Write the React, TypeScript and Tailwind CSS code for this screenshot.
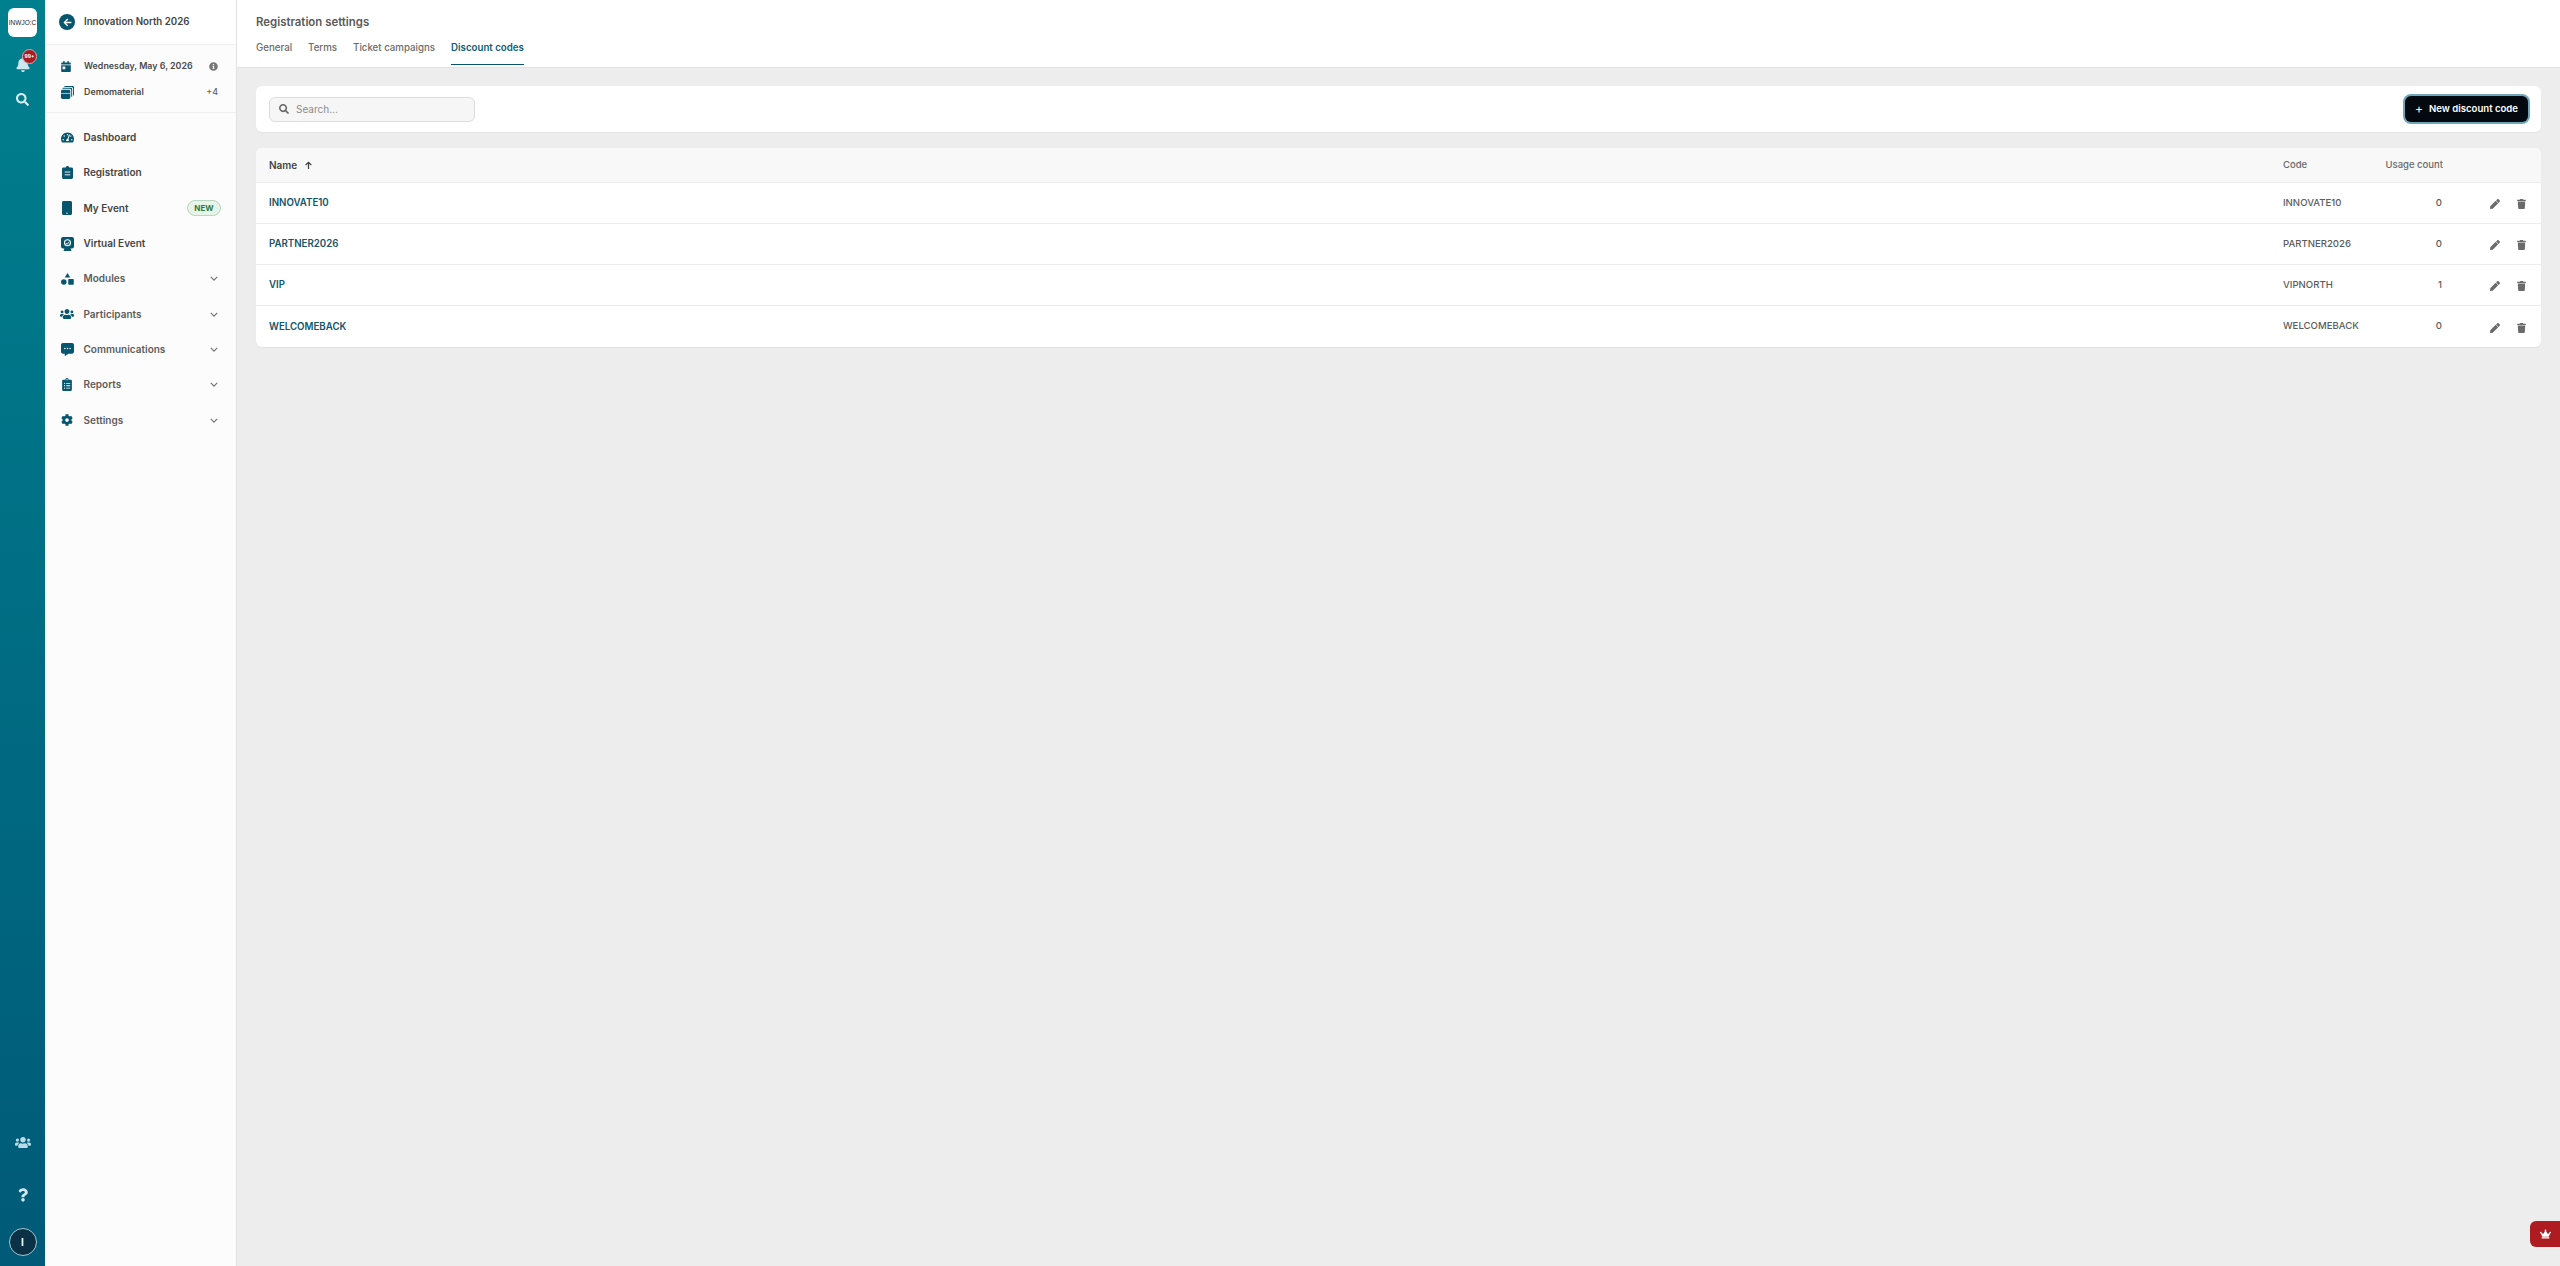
import type { ReactNode } from "react";
import {
  FaArrowLeft,
  FaBell,
  FaCalendarDay,
  FaClipboardList,
  FaCog,
  FaCrown,
  FaInfoCircle,
  FaPen,
  FaQuestion,
  FaSearch,
  FaTachometerAlt,
  FaTrash,
  FaUsers,
} from "react-icons/fa";

const RegistrationIcon = () => (
  <svg viewBox="0 0 12 14" className="h-[13px] w-[11px]" fill="currentColor">
    <path d="M4.2 1.6C4.3.7 5 0 6 0s1.7.7 1.8 1.6H10.5c.8 0 1.5.7 1.5 1.5v9.4c0 .8-.7 1.5-1.5 1.5h-9C.7 14 0 13.3 0 12.5V3.1c0-.8.7-1.5 1.5-1.5h2.7Z" />
    <path d="M3 6.5h6M3 9.5h6" stroke="#fff" strokeWidth="1" />
  </svg>
);

const PhoneIcon = () => (
  <svg viewBox="0 0 10 14" className="h-[14px] w-[10px]" fill="currentColor">
    <path d="M1.5 0h7C9.3 0 10 .7 10 1.5v11c0 .8-.7 1.5-1.5 1.5h-7C.7 14 0 13.3 0 12.5v-11C0 .7.7 0 1.5 0Z" />
    <circle cx="5" cy="12.2" r=".7" fill="#fff" />
  </svg>
);

const VirtualIcon = () => (
  <svg viewBox="0 0 13 14" className="h-[14px] w-[13px]" fill="currentColor">
    <path d="M2 0h9c1.1 0 2 .9 2 2v7.5c0 1.1-.9 2-2 2H9.5l.8 1.5c.2.4 0 1-.5 1H3.2c-.5 0-.7-.6-.5-1l.8-1.5H2c-1.1 0-2-.9-2-2V2C0 .9.9 0 2 0Z" />
    <circle cx="6.5" cy="5.8" r="3" fill="none" stroke="#fff" strokeWidth="1.1" />
    <path d="M5 6.2 6.2 7.2 8.1 4.9" fill="none" stroke="#fff" strokeWidth=".9" />
  </svg>
);

const ModulesIcon = () => (
  <svg viewBox="0 0 14 13" className="h-[12px] w-[13px]" fill="currentColor">
    <path d="M7 0 10 4.8H4Z" />
    <circle cx="3" cy="9.8" r="3" />
    <rect x="7.8" y="6.4" width="6" height="6.4" rx=".8" />
  </svg>
);

const MessageIcon = () => (
  <svg viewBox="0 0 14 14" className="h-[13px] w-[13px]" fill="currentColor">
    <path d="M2 0h10c1.1 0 2 .9 2 2v7.5c0 1.1-.9 2-2 2H8l-3.2 2.3c-.3.2-.8 0-.8-.4v-1.900H2c-1.1 0-2-.9-2-2V2C0 .9.9 0 2 0Z" />
    <circle cx="4.2" cy="5.8" r=".8" fill="#fff" />
    <circle cx="7" cy="5.8" r=".8" fill="#fff" />
    <circle cx="9.8" cy="5.8" r=".8" fill="#fff" />
  </svg>
);

const MaterialIcon = () => (
  <svg viewBox="0 0 14 14" className="h-[13px] w-[13px] text-[#07566f]" fill="currentColor">
    <path d="M4.5 0H12.5C13.3 0 14 .7 14 1.5V9.5C14 10.1 13.5 10.5 13 10.5V2.7C13 1.8 12.2 1 11.3 1H3.5C3.5.5 3.9 0 4.500 0Z" />
    <path d="M2.5 2H10.5C11.3 2 12 2.700 12 3.5V11.5H11V4.700C11 3.800 10.200 3 9.300 3H1.500C1.500 2.500 1.900 2 2.500 2Z" />
    <path d="M1.500 4H8.500C9.300 4 10 4.700 10 5.500V12.500C10 13.300 9.300 14 8.500 14H1.500C.7 14 0 13.300 0 12.500V5.500C0 4.700.7 4 1.500 4Z" />
    <path d="M0 8h10" stroke="#fff" strokeWidth=".7" />
  </svg>
);

const Chevron = () => (
  <svg viewBox="0 0 10 6" className="ml-auto h-[5px] w-[8px]" fill="none" stroke="#777" strokeWidth="1.6">
    <path d="M1 1l4 4 4-4" />
  </svg>
);

type NavItem = { label: string; icon: ReactNode; muted?: boolean; chevron?: boolean; badge?: string };

const navItems: NavItem[] = [
  { label: "Dashboard", icon: <FaTachometerAlt className="h-[13px] w-[13px]" /> },
  { label: "Registration", icon: <RegistrationIcon /> },
  { label: "My Event", icon: <PhoneIcon />, badge: "NEW" },
  { label: "Virtual Event", icon: <VirtualIcon /> },
  { label: "Modules", icon: <ModulesIcon />, muted: true, chevron: true },
  { label: "Participants", icon: <FaUsers className="h-[12px] w-[14px]" />, muted: true, chevron: true },
  { label: "Communications", icon: <MessageIcon />, muted: true, chevron: true },
  { label: "Reports", icon: <FaClipboardList className="h-[13px] w-[10px]" />, muted: true, chevron: true },
  { label: "Settings", icon: <FaCog className="h-[12px] w-[12px]" />, muted: true, chevron: true },
];

const codes = [
  { name: "INNOVATE10", code: "INNOVATE10", count: 0 },
  { name: "PARTNER2026", code: "PARTNER2026", count: 0 },
  { name: "VIP", code: "VIPNORTH", count: 1 },
  { name: "WELCOMEBACK", code: "WELCOMEBACK", count: 0 },
];

const tabs = ["General", "Terms", "Ticket campaigns", "Discount codes"];

export default function App() {
  return (
    <div className="flex h-[1266px] w-full overflow-hidden bg-[#ededed] font-['Inter',sans-serif]">
      {/* Icon rail */}
      <aside className="flex w-[45px] shrink-0 flex-col items-center bg-gradient-to-b from-[#00808f] to-[#005a78]">
        <div className="mt-2 flex h-[29px] w-[29px] items-center justify-center overflow-hidden whitespace-nowrap rounded-md bg-white font-['Liberation_Sans',sans-serif] text-[6.5px] text-[#222]">
          INWJO:C
        </div>
        <div className="relative mt-[17px] flex h-[20px] w-full items-center justify-center text-[#cfe7ee]">
          <FaBell className="h-[15px] w-[14px]" />
          <span className="absolute left-[22px] top-[-5px] flex h-[15px] w-[15px] items-center justify-center rounded-full border border-[#d9a3a3] bg-[#a81c22] text-[5px] font-bold text-white">
            99+
          </span>
        </div>
        <FaSearch className="mt-[19px] h-[13px] w-[13px] text-[#d5eef3]" />
        <div className="flex-1" />
        <FaUsers className="mb-[39px] h-[13px] w-[16px] text-[#b9dde6]" />
        <FaQuestion className="mb-[26px] h-[14px] w-[10px] text-[#cfe7ee]" />
        <div className="mb-[10px] flex h-[28px] w-[28px] items-center justify-center rounded-full border border-[#a6c9d1] bg-[#0b3146] text-[10px] font-bold text-white">
          I
        </div>
      </aside>

      {/* Event sidebar */}
      <nav className="flex w-[192px] shrink-0 flex-col border-r border-[#e2e2e2] bg-[#fcfcfc]">
        <div className="flex h-[45px] items-center gap-[9px] border-b border-[#f0f0f0] bg-white pl-[14px]">
          <span className="flex h-4 w-4 items-center justify-center rounded-full bg-[#07566f] text-white">
            <FaArrowLeft className="h-[9px] w-[9px]" />
          </span>
          <span className="text-[9.7px] font-semibold text-[#444]">Innovation North 2026</span>
        </div>
        <div className="flex h-[68px] flex-col gap-[14px] border-b border-[#f0f0f0] pl-[16px] pr-[18px] pt-[15px] text-[8.9px] font-semibold text-[#4a4a4a]">
          <div className="flex h-[12px] items-center">
            <FaCalendarDay className="h-[11px] w-[10px] text-[#07566f]" />
            <span className="ml-[13px]">Wednesday, May 6, 2026</span>
            <FaInfoCircle className="ml-auto h-[9px] w-[9px] text-[#777]" />
          </div>
          <div className="flex h-[12px] items-center">
            <MaterialIcon />
            <span className="ml-[10px]">Demomaterial</span>
            <span className="ml-auto font-medium text-[#666]">+4</span>
          </div>
        </div>
        <ul className="flex flex-col pt-[7px] text-[#07566f]">
          {navItems.map((item) => (
            <li key={item.label} className="flex h-[35.3px] items-center pl-[15px] pr-[18px]">
              <span className="flex w-[14px] justify-center">{item.icon}</span>
              <span className={`ml-[9.5px] text-[10px] font-semibold ${item.muted ? "text-[#5c5c5c]" : "text-[#444]"}`}>
                {item.label}
              </span>
              {item.chevron && <Chevron />}
              {item.badge && (
                <span className="-mr-[3px] ml-auto flex h-[16px] w-[34px] items-center justify-center rounded-full border border-[#b9d6bf] bg-[#e7f4e9] text-[8px] font-bold text-[#2c7a43]">
                  {item.badge}
                </span>
              )}
            </li>
          ))}
        </ul>
      </nav>

      {/* Main */}
      <main className="relative flex min-w-0 flex-1 flex-col">
        <header className="h-[68px] border-b border-[#e2e2e2] bg-white px-[19px]">
          <h1 className="pt-[15px] text-[11.4px] font-semibold leading-[15px] text-[#5a5a5a]">Registration settings</h1>
          <div className="mt-[10px] flex gap-4 text-[9.7px] font-medium text-[#6b6b6b]">
            {tabs.map((tab) =>
              tab === "Discount codes" ? (
                <span key={tab} className="h-[25px] border-b border-[#07566f] pt-[1px] leading-[14px] font-semibold text-[#0f5f73]">
                  {tab}
                </span>
              ) : (
                <span key={tab} className="h-[25px] pt-[1px] leading-[14px]">
                  {tab}
                </span>
              ),
            )}
          </div>
        </header>

        <div className="flex flex-col gap-4 py-[18px] pl-[19px] pr-[19px]">
          <section className="flex h-[46px] items-center justify-between rounded-md bg-white px-[13px] shadow-[0_1px_1px_rgba(0,0,0,0.04)]">
            <div className="flex h-[25px] w-[206px] items-center gap-[7px] rounded-md border border-[#dcdcdc] bg-[#f6f6f6] pl-[9px]">
              <FaSearch className="h-[10px] w-[10px] text-[#666]" />
              <span className="text-[10px] text-[#8c8c8c]">Search...</span>
            </div>
            <button className="flex h-[26px] w-[123px] items-center justify-center gap-[6px] rounded-md bg-[#03090f] text-[9.6px] font-semibold text-white ring-2 ring-[#6fa7b8]">
              <span className="text-[12px] font-normal leading-none">+</span>
              New discount code
            </button>
          </section>

          <section className="overflow-hidden rounded-md bg-white shadow-[0_1px_1px_rgba(0,0,0,0.05)]">
            <div className="flex h-[35px] items-center border-b border-[#ececec] bg-[#f8f8f8] pl-[13px] text-[9.5px] text-[#6a6a6a]">
              <div className="flex flex-1 items-center gap-[7px] text-[10px] font-semibold text-[#444]">
                Name
                <svg viewBox="0 0 10 10" className="h-[9px] w-[9px]" fill="none" stroke="#444" strokeWidth="1.4">
                  <path d="M5 9V1.5M1.8 4.5 5 1.5l3.2 3" />
                </svg>
              </div>
              <div className="w-[100px] font-medium">Code</div>
              <div className="flex w-[60px] justify-end whitespace-nowrap font-medium">Usage count</div>
              <div className="w-[98px]" />
            </div>
            {codes.map((row, i) => (
              <div
                key={row.name}
                className={`flex h-[41px] items-center pl-[13px] text-[9.6px] font-medium text-[#5c5c5c] ${i < codes.length - 1 ? "border-b border-[#ececec]" : ""}`}
              >
                <div className="flex-1 pt-[1px] text-[9.7px] font-semibold text-[#12566c]">{row.name}</div>
                <div className="w-[100px]">{row.code}</div>
                <div className="w-[60px] pr-[1px] text-right">{row.count}</div>
                <div className="flex w-[98px] items-center pl-[47px] pt-[2px] text-[#6b6b6b]">
                  <FaPen className="h-[10px] w-[10px]" />
                  <FaTrash className="ml-[17px] h-[10px] w-[9px]" />
                </div>
              </div>
            ))}
          </section>
        </div>

        <div className="absolute bottom-[19px] right-0 flex h-[26px] w-[30px] items-center rounded-l-md bg-[#ae1c22] pl-[10px] text-white">
          <FaCrown className="h-[10px] w-[11px]" />
        </div>
      </main>
    </div>
  );
}
